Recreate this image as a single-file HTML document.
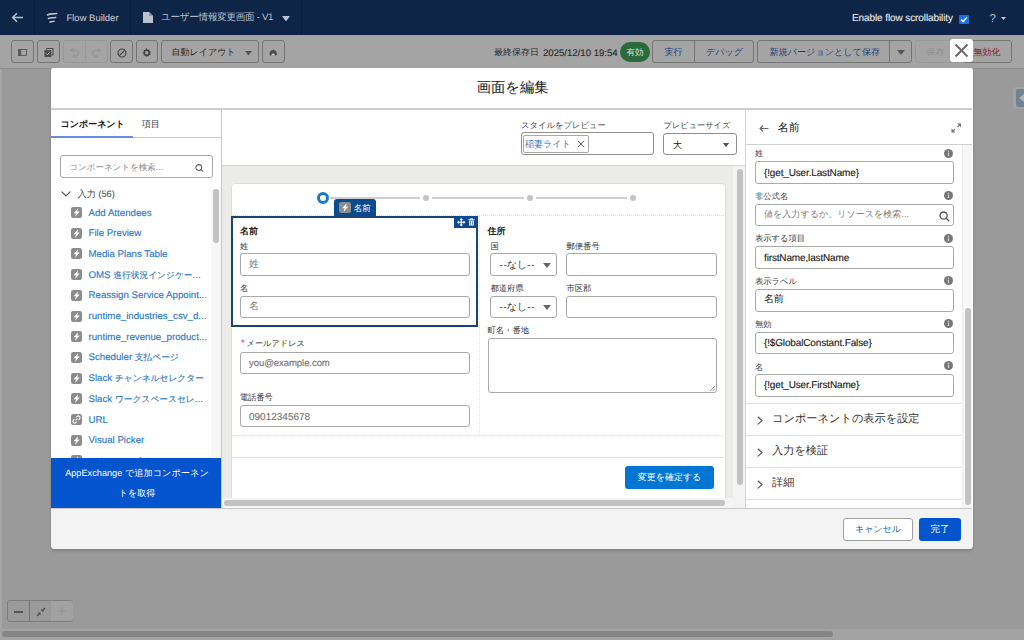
<!DOCTYPE html>
<html><head><meta charset="utf-8">
<style>
*{box-sizing:border-box;margin:0;padding:0}
html,body{width:1024px;height:640px;overflow:hidden;background:#9a9a9a;font-family:"Liberation Sans",sans-serif;color:#181818;text-rendering:geometricPrecision}
.a{position:absolute}
#hdr{left:0;top:0;width:1024px;height:35px;background:#0f2547}
#tb{left:0;top:35px;width:1024px;height:34px;background:#a4a4a4;border-bottom:1px solid #8e8e8e}
.tbtn{position:absolute;border:1px solid #747474;border-radius:3px;height:23px;top:5px}
.txt{position:absolute;white-space:nowrap;line-height:1}
.inp{border:1px solid #a9a9a9;border-radius:3px;background:#fff}
.j{font-size:0.9em}
.lt{-webkit-text-stroke:0.12px currentColor}
.li{position:absolute;left:0;width:170px;height:12px}
#modal{left:51px;top:68px;width:921.6px;height:481px;background:#fff;border-radius:2px 2px 4px 4px;overflow:hidden;box-shadow:0 2px 3px rgba(0,0,0,0.16)}
</style></head><body>
<div id="hdr" class="a">
  <svg class="a" style="left:11px;top:12px" width="13" height="11" viewBox="0 0 13 11"><path d="M12 5.5H2M6 1.2L1.7 5.5L6 9.8" stroke="#b9c1cf" stroke-width="1.5" fill="none"/></svg>
  <div class="a" style="left:34px;top:0;width:1px;height:35px;background:#0a1d3b"></div>
  <svg class="a" style="left:46px;top:11.5px" width="12" height="12" viewBox="0 0 12 12"><path d="M1.5 3C4.5 1.2 7 2.4 10.6 1.5M2.5 6.5C4.8 5.2 7 6.2 9.6 5.4M4 10C5.4 9.2 6.6 9.8 8 9.3" stroke="#b9c1cf" stroke-width="1.6" fill="none" stroke-linecap="round"/></svg>
  <div class="txt lt" style="left:66.5px;top:13.8px;font-size:9.5px;color:#b9c1cf;letter-spacing:-0.02px">Flow Builder</div>
  <div class="a" style="left:130px;top:0;width:1px;height:35px;background:#0a1d3b"></div>
  <svg class="a" style="left:143px;top:12px" width="10" height="11" viewBox="0 0 10 11"><path d="M0 0H6L10 4V11H0Z" fill="#b9c1cf"/><path d="M6 0V4H10Z" fill="#8d96a6"/></svg>
  <div class="txt" style="left:161px;top:13px;font-size:9.6px;color:#b9c1cf;letter-spacing:-0.3px">ユーザー情報変更画面 - V1</div>
  <svg class="a" style="left:281.5px;top:15.5px" width="8" height="5.5" viewBox="0 0 8 5.5"><path d="M0 0H8L4 5.5Z" fill="#b9c1cf"/></svg>
  <div class="a" style="left:301px;top:0;width:1px;height:35px;background:#0a1d3b"></div>
  <div class="txt lt" style="left:852px;top:14.3px;font-size:10px;color:#e6e8ec;letter-spacing:-0.1px">Enable flow scrollability</div>
  <div class="a" style="left:959px;top:15px;width:10px;height:9px;background:#1d6fe0;border-radius:1px"></div>
  <svg class="a" style="left:959px;top:15px" width="10" height="9" viewBox="0 0 10 9"><path d="M2.2 4.6L4.2 6.6L7.8 2.4" stroke="#fff" stroke-width="1.4" fill="none"/></svg>
  <div class="txt" style="left:989.5px;top:13.5px;font-size:11.5px;color:#b9c1cf">?</div>
  <svg class="a" style="left:1001px;top:17px" width="5" height="3" viewBox="0 0 5 3"><path d="M0 0H5L2.5 3Z" fill="#c3c8d0"/></svg>
</div>
<div id="tb" class="a">
  <div class="tbtn" style="left:11px;width:23px"></div>
  <svg class="a" style="left:18.3px;top:13.8px" width="9" height="7" viewBox="0 0 9 7"><rect x="0.5" y="0.5" width="8" height="6" fill="none" stroke="#585858" stroke-width="0.9"/><rect x="0" y="0" width="3.2" height="7" fill="#5a5a5a"/></svg>
  <div class="tbtn" style="left:37px;width:23px"></div>
  <svg class="a" style="left:44px;top:12.5px" width="9.5" height="9.5" viewBox="0 0 11 11"><path d="M3 2V0.6H10.4V8H9" stroke="#4a4a4a" stroke-width="1.2" fill="none"/><rect x="0.5" y="2.5" width="8" height="8" fill="#4a4a4a"/><path d="M2.3 6.3L3.9 7.9L6.8 4.8" stroke="#bbb" stroke-width="1.1" fill="none"/></svg>
  <div class="tbtn" style="left:62.5px;width:45px;border-color:#979797"></div>
  <div class="a" style="left:85px;top:6px;width:1px;height:21px;background:#9a9a9a"></div>
  <svg class="a" style="left:69.5px;top:12.3px" width="10" height="10" viewBox="0 0 11 11"><path d="M3.5 1L1 3.5L3.5 6M1.2 3.5H6.5A3.3 3.3 0 0 1 6.5 10H3" stroke="#8d8d8d" stroke-width="1.1" fill="none"/></svg>
  <svg class="a" style="left:91px;top:12.3px" width="10" height="10" viewBox="0 0 11 11"><path d="M7.5 1L10 3.5L7.5 6M9.8 3.5H4.5A3.3 3.3 0 0 0 4.5 10H8" stroke="#8d8d8d" stroke-width="1.1" fill="none"/></svg>
  <div class="tbtn" style="left:110px;width:23px"></div>
  <svg class="a" style="left:116.5px;top:13px" width="10" height="10" viewBox="0 0 10 10"><circle cx="5" cy="5" r="4" stroke="#444" stroke-width="1.2" fill="none"/><path d="M2.2 7.8L7.8 2.2" stroke="#444" stroke-width="1.2"/></svg>
  <div class="tbtn" style="left:136px;width:22px"></div>
  <svg class="a" style="left:141.8px;top:13.2px" width="9.5" height="9.5" viewBox="0 0 11 11"><path d="M5.5 0.5L6.6 2L8.5 1.6L8.6 3.5L10.4 4.3L9.3 5.8L10.2 7.5L8.3 8L7.9 9.9L6.1 9.2L4.6 10.4L3.7 8.7L1.8 8.6L2.1 6.7L0.6 5.5L2.1 4.3L1.8 2.4L3.7 2.3L4.6 0.6Z" fill="#444"/><circle cx="5.5" cy="5.5" r="2" fill="#a4a4a4"/></svg>
  <div class="tbtn" style="left:161px;width:98px"></div>
  <div class="txt" style="left:171.5px;top:13px;font-size:9px;color:#2a2a2a">自動レイアウト</div>
  <svg class="a" style="left:244.5px;top:16px" width="7" height="4.5" viewBox="0 0 8 5"><path d="M0 0H8L4 5Z" fill="#555"/></svg>
  <div class="tbtn" style="left:262px;width:23px"></div>
  <svg class="a" style="left:268.7px;top:13.5px" width="8.5" height="7.5" viewBox="0 0 8.5 7.5"><path d="M0.6 5.8C0.2 2.6 2 1 4.25 1C6.5 1 8.3 2.6 7.9 5.8C7.5 7.2 1 7.2 0.6 5.8Z" fill="#4a4a4a"/><path d="M3.9 0.2L4.6 0.2L4.5 1.4H4Z" fill="#4a4a4a"/><path d="M2.3 6.8C2.3 5 3.2 4.2 4.25 4.2C5.3 4.2 6.2 5 6.2 6.8Z" fill="#b9b9b9"/></svg>

  <div class="txt" style="left:494px;top:13px;font-size:9px;color:#2a2a2a">最終保存日</div><div class="txt lt" style="left:543px;top:13.6px;font-size:9.6px;color:#2a2a2a">2025/12/10 19:54</div>
  <div class="a" style="left:620px;top:7px;width:30px;height:19.7px;border-radius:10px;background:#2a6a3b"></div>
  <div class="txt" style="left:626.5px;top:12.8px;font-size:8.5px;color:#d8e3da">有効</div>
  <div class="tbtn" style="left:652px;width:102px"></div>
  <div class="a" style="left:694px;top:6px;width:1px;height:21px;background:#747474"></div>
  <div class="txt" style="left:664.5px;top:13px;font-size:9px;color:#1d3f7a">実行</div>
  <div class="txt" style="left:706px;top:13px;font-size:9px;color:#1d3f7a">デバッグ</div>
  <div class="tbtn" style="left:757px;width:155px"></div>
  <div class="a" style="left:889px;top:6px;width:1px;height:21px;background:#747474"></div>
  <div class="txt" style="left:769.5px;top:13px;font-size:9.1px;color:#1d3f7a">新規バージョンとして保存</div>
  <svg class="a" style="left:897px;top:15px" width="8" height="5" viewBox="0 0 8 5"><path d="M0 0H8L4 5Z" fill="#555"/></svg>
  <div class="tbtn" style="left:915px;width:50px;border-color:#9a9a9a"></div>
  <div class="txt" style="left:926.5px;top:13px;font-size:9px;color:#8f8f8f">保存</div>
  <div class="tbtn" style="left:962px;width:50px"></div>
  <div class="txt" style="left:973.5px;top:13px;font-size:9px;color:#7c2323">無効化</div>
</div>
<div class="a" style="left:950px;top:39px;width:23px;height:23px;background:#fff;border-radius:3px"></div>
<svg class="a" style="left:954px;top:43px" width="15" height="15" viewBox="0 0 15 15"><path d="M1.5 1.5L13.5 13.5M13.5 1.5L1.5 13.5" stroke="#6b6b6b" stroke-width="2"/></svg>
<div class="a" style="left:0;top:69px;width:2px;height:571px;background:#a6a6a6"></div>
<div class="a" style="left:1013px;top:87px;width:11px;height:22px;background:#a3a3a3;border-radius:3px 0 0 3px"></div>
<div class="a" style="left:1016px;top:89px;width:8px;height:18px;background:#728290;border-radius:2px 0 0 2px"></div>
<svg class="a" style="left:1019px;top:94px" width="5" height="8" viewBox="0 0 5 8"><path d="M5 0V8L0 4Z" fill="#a9b3bb"/></svg>
<div class="a" style="left:7px;top:600px;width:66px;height:22px;border:1px solid #7c7c7c;border-radius:3px"></div>
<div class="a" style="left:29px;top:600px;width:1px;height:22px;background:#747474"></div>
<div class="a" style="left:51px;top:600px;width:1px;height:22px;background:#929292"></div>
<div class="a" style="left:51px;top:601px;width:22px;height:20px;background:#a2a2a2;border-radius:0 3px 3px 0"></div>
<div class="a" style="left:14px;top:611px;width:9px;height:1.5px;background:#555"></div>
<svg class="a" style="left:35.5px;top:606.5px" width="10" height="10" viewBox="0 0 10 10"><path d="M1 9L3.6 6.4M9 1L6.4 3.6" stroke="#444" stroke-width="1.1"/><path d="M1.8 5.5H4.5V8.2Z M8.2 4.5H5.5V1.8Z" fill="#444"/></svg>
<svg class="a" style="left:57px;top:606px" width="10" height="10" viewBox="0 0 10 10"><path d="M5 1V9M1 5H9" stroke="#939393" stroke-width="1.1"/></svg>
<div class="a" style="left:0;top:629px;width:1024px;height:11px;background:#a3a3a3"></div>
<div class="a" style="left:2px;top:631px;width:831px;height:6px;background:#858585;border-radius:3px"></div>
<div id="modal" class="a">
  <!-- header -->
  <div class="txt" style="left:425.7px;top:13px;font-size:14.3px;color:#181818;line-height:15px">画面を編集</div>
  <div class="a" style="left:0;top:40.4px;width:921px;height:1.4px;background:#cdcdcd"></div>

  <!-- left panel -->
  <div class="a" style="left:170px;top:41px;width:1px;height:399px;background:#c9c9c9"></div>
  <div class="txt" style="left:9.5px;top:51.5px;font-size:9px;font-weight:bold;color:#181818">コンポーネント</div>
  <div class="txt" style="left:90.7px;top:51.5px;font-size:9px;color:#3e3e3e">項目</div>
  <div class="a" style="left:0;top:69px;width:170px;height:1px;background:#c9c9c9"></div>
  <div class="a" style="left:0;top:68px;width:82px;height:2px;background:#6a8be0"></div>
  <div class="a" style="left:9px;top:87px;width:153px;height:23px;border:1px solid #a8a8a8;border-radius:3px"></div>
  <div class="txt" style="left:18.3px;top:94.5px;font-size:8.5px;color:#8a8a8a">コンポーネントを検索...</div>
  <svg class="a" style="left:143.6px;top:95.5px" width="9" height="8" viewBox="0 0 11 10"><circle cx="4.6" cy="4.4" r="3.6" stroke="#5e5e5e" stroke-width="1.3" fill="none"/><path d="M7.3 7.1L10 9.6" stroke="#5e5e5e" stroke-width="1.4"/></svg>
  <svg class="a" style="left:10px;top:123px" width="10" height="6" viewBox="0 0 10 6"><path d="M0.7 0.7L5 5L9.3 0.7" stroke="#555" stroke-width="1.2" fill="none"/></svg>
  <div class="txt" style="left:26.5px;top:122.3px;font-size:9.2px;color:#3e3e3e">入力 (56)</div>
  <div class="a" style="left:0;top:118px;width:170px;height:272px;overflow:hidden"><div class="a" style="left:0;top:-118px;width:170px;height:400px"><div class="li" style="top:139.0px">
<svg class="a" style="left:20px;top:0" width="11" height="11" viewBox="0 0 11 11"><rect width="11" height="11" rx="2.2" fill="#8c8c8c"/><path d="M7.2 1.2L2.6 6.3H5L4 9.9L8.7 4.5H6.3Z" fill="#fff"/></svg>
<div class="txt lt" style="left:37.5px;top:1.6px;font-size:9.7px;color:#2a77c6">Add Attendees</div></div>
<div class="li" style="top:159.7px">
<svg class="a" style="left:20px;top:0" width="11" height="11" viewBox="0 0 11 11"><rect width="11" height="11" rx="2.2" fill="#8c8c8c"/><path d="M7.2 1.2L2.6 6.3H5L4 9.9L8.7 4.5H6.3Z" fill="#fff"/></svg>
<div class="txt lt" style="left:37.5px;top:1.6px;font-size:9.7px;color:#2a77c6">File Preview</div></div>
<div class="li" style="top:180.4px">
<svg class="a" style="left:20px;top:0" width="11" height="11" viewBox="0 0 11 11"><rect width="11" height="11" rx="2.2" fill="#8c8c8c"/><path d="M7.2 1.2L2.6 6.3H5L4 9.9L8.7 4.5H6.3Z" fill="#fff"/></svg>
<div class="txt lt" style="left:37.5px;top:1.6px;font-size:9.7px;color:#2a77c6">Media Plans Table</div></div>
<div class="li" style="top:201.1px">
<svg class="a" style="left:20px;top:0" width="11" height="11" viewBox="0 0 11 11"><rect width="11" height="11" rx="2.2" fill="#8c8c8c"/><path d="M7.2 1.2L2.6 6.3H5L4 9.9L8.7 4.5H6.3Z" fill="#fff"/></svg>
<div class="txt lt" style="left:37.5px;top:1.6px;font-size:9.7px;color:#2a77c6">OMS <span class="j">進行状況インジケー</span>...</div></div>
<div class="li" style="top:221.8px">
<svg class="a" style="left:20px;top:0" width="11" height="11" viewBox="0 0 11 11"><rect width="11" height="11" rx="2.2" fill="#8c8c8c"/><path d="M7.2 1.2L2.6 6.3H5L4 9.9L8.7 4.5H6.3Z" fill="#fff"/></svg>
<div class="txt lt" style="left:37.5px;top:1.6px;font-size:9.7px;color:#2a77c6">Reassign Service Appoint...</div></div>
<div class="li" style="top:242.5px">
<svg class="a" style="left:20px;top:0" width="11" height="11" viewBox="0 0 11 11"><rect width="11" height="11" rx="2.2" fill="#8c8c8c"/><path d="M7.2 1.2L2.6 6.3H5L4 9.9L8.7 4.5H6.3Z" fill="#fff"/></svg>
<div class="txt lt" style="left:37.5px;top:1.6px;font-size:9.7px;color:#2a77c6">runtime_industries_csv_d...</div></div>
<div class="li" style="top:263.2px">
<svg class="a" style="left:20px;top:0" width="11" height="11" viewBox="0 0 11 11"><rect width="11" height="11" rx="2.2" fill="#8c8c8c"/><path d="M7.2 1.2L2.6 6.3H5L4 9.9L8.7 4.5H6.3Z" fill="#fff"/></svg>
<div class="txt lt" style="left:37.5px;top:1.6px;font-size:9.7px;color:#2a77c6">runtime_revenue_product...</div></div>
<div class="li" style="top:283.9px">
<svg class="a" style="left:20px;top:0" width="11" height="11" viewBox="0 0 11 11"><rect width="11" height="11" rx="2.2" fill="#8c8c8c"/><path d="M7.2 1.2L2.6 6.3H5L4 9.9L8.7 4.5H6.3Z" fill="#fff"/></svg>
<div class="txt lt" style="left:37.5px;top:1.6px;font-size:9.7px;color:#2a77c6">Scheduler <span class="j">支払ページ</span></div></div>
<div class="li" style="top:304.6px">
<svg class="a" style="left:20px;top:0" width="11" height="11" viewBox="0 0 11 11"><rect width="11" height="11" rx="2.2" fill="#8c8c8c"/><path d="M7.2 1.2L2.6 6.3H5L4 9.9L8.7 4.5H6.3Z" fill="#fff"/></svg>
<div class="txt lt" style="left:37.5px;top:1.6px;font-size:9.7px;color:#2a77c6">Slack <span class="j">チャンネルセレクター</span></div></div>
<div class="li" style="top:325.3px">
<svg class="a" style="left:20px;top:0" width="11" height="11" viewBox="0 0 11 11"><rect width="11" height="11" rx="2.2" fill="#8c8c8c"/><path d="M7.2 1.2L2.6 6.3H5L4 9.9L8.7 4.5H6.3Z" fill="#fff"/></svg>
<div class="txt lt" style="left:37.5px;top:1.6px;font-size:9.7px;color:#2a77c6">Slack <span class="j">ワークスペースセレ</span>...</div></div>
<div class="li" style="top:346.0px">
<svg class="a" style="left:20px;top:0" width="11" height="11" viewBox="0 0 11 11"><rect width="11" height="11" rx="2.2" fill="#8c8c8c"/><path d="M4.6 6.4L6.4 4.6M5.2 3.4L6.2 2.4A1.6 1.6 0 0 1 8.6 4.8L7.6 5.8M5.8 7.6L4.8 8.6A1.6 1.6 0 0 1 2.4 6.2L3.4 5.2" stroke="#fff" stroke-width="1.1" fill="none"/></svg>
<div class="txt lt" style="left:37.5px;top:1.6px;font-size:9.7px;color:#2a77c6">URL</div></div>
<div class="li" style="top:366.7px">
<svg class="a" style="left:20px;top:0" width="11" height="11" viewBox="0 0 11 11"><rect width="11" height="11" rx="2.2" fill="#8c8c8c"/><path d="M7.2 1.2L2.6 6.3H5L4 9.9L8.7 4.5H6.3Z" fill="#fff"/></svg>
<div class="txt lt" style="left:37.5px;top:1.6px;font-size:9.7px;color:#2a77c6">Visual Picker</div></div>
<div class="li" style="top:387.4px">
<svg class="a" style="left:20px;top:0" width="11" height="11" viewBox="0 0 11 11"><rect width="11" height="11" rx="2.2" fill="#8c8c8c"/><path d="M7.2 1.2L2.6 6.3H5L4 9.9L8.7 4.5H6.3Z" fill="#fff"/></svg>
<div class="txt lt" style="left:37.5px;top:1.6px;font-size:9.7px;color:#2a77c6"><span class="j">アクションボタン</span></div></div></div></div>
  <div class="a" style="left:160px;top:121px;width:10px;height:269px;background:#f7f7f7"></div>
  <div class="a" style="left:162px;top:121px;width:6px;height:54px;background:#c2c2c2;border-radius:3px"></div>
  <div class="a" style="left:0;top:390px;width:170px;height:50px;background:#0454ce"></div>
  <div class="txt" style="left:1px;top:401px;width:170px;text-align:center;font-size:9.2px;color:#fff">AppExchange で追加コンポーネン</div>
  <div class="txt" style="left:1px;top:421px;width:170px;text-align:center;font-size:9px;color:#fff">トを取得</div>

  <!-- center panel -->
  <div class="a" style="left:694px;top:41px;width:1px;height:399px;background:#d4d4d4"></div>
  <div class="txt" style="left:470px;top:52.5px;font-size:8.3px;color:#444">スタイルをプレビュー</div>
  <div class="a" style="left:470px;top:64.4px;width:133.3px;height:22.8px;border:1px solid #8f8f8f;border-radius:3px"></div>
  <div class="a" style="left:472px;top:67px;width:66px;height:18px;border:1px solid #a8a8a8;border-radius:2px"></div>
  <div class="txt" style="left:474px;top:72px;font-size:9px;color:#2674c4">稲妻ライト</div>
  <svg class="a" style="left:526px;top:72px" width="8" height="8" viewBox="0 0 8 8"><path d="M0.8 0.8L7.2 7.2M7.2 0.8L0.8 7.2" stroke="#606060" stroke-width="1"/></svg>
  <div class="txt" style="left:612.5px;top:53.5px;font-size:8.2px;color:#444">プレビューサイズ</div>
  <div class="a" style="left:612.3px;top:64.6px;width:73.6px;height:22.6px;border:1px solid #8f8f8f;border-radius:3px"></div>
  <div class="txt" style="left:622px;top:72.5px;font-size:9px;color:#181818">大</div>
  <svg class="a" style="left:671px;top:75px" width="8" height="4" viewBox="0 0 8 5"><path d="M0 0H8L4 5Z" fill="#555"/></svg>
  <div class="a" style="left:171px;top:97px;width:523px;height:1px;background:#d4d4d4"></div>
  <div class="a" style="left:171px;top:98px;width:523px;height:342px;background:#ebebea"></div>
    <div class="a" style="left:179.6px;top:115.3px;width:495.6px;height:325px;background:#fff;border:1px solid #dddddd;border-radius:4px 4px 0 0"></div>
  <!-- progress -->
  <div class="a" style="left:279px;top:129px;width:308px;height:2px;background:#cfcfcf"></div>
  <div class="a" style="left:266px;top:124px;width:12px;height:12px;border-radius:50%;border:3px solid #1a78c6;background:#fff"></div>
  <div class="a" style="left:372px;top:127px;width:6px;height:6px;border-radius:50%;background:#c4c4c4;box-shadow:0 0 0 3px #fff"></div>
  <div class="a" style="left:476px;top:127px;width:6px;height:6px;border-radius:50%;background:#c4c4c4;box-shadow:0 0 0 3px #fff"></div>
  <div class="a" style="left:579px;top:127px;width:6px;height:6px;border-radius:50%;background:#c4c4c4;box-shadow:0 0 0 3px #fff"></div>
  <!-- dashed section outlines -->
  <div class="a" style="left:181px;top:147px;width:492px;height:0;border-top:1px dotted #dedede"></div>
  <div class="a" style="left:428px;top:148px;width:0;height:220px;border-left:1px dotted #e2e2e2"></div>
  <div class="a" style="left:181px;top:367px;width:492px;height:0;border-top:1px dotted #dedede"></div>
  <!-- tab -->
  <div class="a" style="left:283px;top:131px;width:42px;height:18px;background:#0b4a8f;border-radius:3px 3px 0 0"></div>
  <svg class="a" style="left:288px;top:134px" width="12" height="11" viewBox="0 0 12 11"><rect width="12" height="11" rx="2" fill="#8c8c8c"/><path d="M7.7 1.2L3.1 6.3H5.5L4.5 9.9L9.2 4.5H6.8Z" fill="#fff"/></svg>
  <div class="txt" style="left:302.7px;top:135.7px;font-size:8.6px;color:#fff">名前</div>
  <!-- selected section -->
  <div class="a" style="left:180px;top:148px;width:247px;height:111px;border:2px solid #1a4474"></div>
  <div class="a" style="left:403px;top:148px;width:24px;height:12px;background:#0b4a92"></div>
  <svg class="a" style="left:406px;top:150px" width="8.5" height="8.5" viewBox="0 0 10 10"><path d="M5 1.5V8.5M1.5 5H8.5" stroke="#fff" stroke-width="1.4"/><path d="M5 0L2.9 2.4H7.1Z M5 10L2.9 7.6H7.1Z M0 5L2.4 2.9V7.1Z M10 5L7.6 2.9V7.1Z" fill="#fff"/></svg>
  <svg class="a" style="left:416.5px;top:150px" width="7" height="8" viewBox="0 0 9 10"><path d="M0.5 2H8.5M3 2V0.8H6V2" stroke="#fff" stroke-width="1.1" fill="none"/><path d="M1.5 3H7.5V9.5H1.5Z" fill="#fff"/><path d="M3.3 4V8.5M5.7 4V8.5" stroke="#0b3f7c" stroke-width="0.8"/></svg>
  <div class="txt" style="left:189px;top:158.5px;font-size:9px;font-weight:bold;color:#222">名前</div>
  <div class="txt" style="left:189px;top:174px;font-size:8.3px;color:#333">姓</div>
  <div class="a inp" style="left:189px;top:185px;width:230px;height:23px"></div>
  <div class="txt" style="left:198px;top:192px;font-size:10px;color:#7a7a7a">姓</div>
  <div class="txt" style="left:189px;top:215.5px;font-size:8.3px;color:#333">名</div>
  <div class="a inp" style="left:189px;top:228px;width:230px;height:22px"></div>
  <div class="txt" style="left:198px;top:234px;font-size:10px;color:#7a7a7a">名</div>
  <div class="txt" style="left:190px;top:271px;font-size:9.5px;color:#c23934">*</div>
  <div class="txt" style="left:195.5px;top:272.3px;font-size:8.2px;color:#333">メールアドレス</div>
  <div class="a inp" style="left:189px;top:284px;width:230px;height:22px"></div>
  <div class="txt lt" style="left:198px;top:291.4px;font-size:9.6px;color:#747474;letter-spacing:-0.1px">you@example.com</div>
  <div class="txt" style="left:188.7px;top:325.3px;font-size:8.3px;color:#333">電話番号</div>
  <div class="a inp" style="left:189px;top:337px;width:230px;height:22px"></div>
  <div class="txt lt" style="left:198px;top:344.7px;font-size:10px;color:#747474">09012345678</div>
  <!-- right column -->
  <div class="txt" style="left:436.5px;top:158.5px;font-size:9px;font-weight:bold;color:#222">住所</div>
  <div class="txt" style="left:439.5px;top:174px;font-size:8.3px;color:#333">国</div>
  <div class="txt" style="left:515.5px;top:174px;font-size:8.3px;color:#333">郵便番号</div>
  <div class="a inp" style="left:439.2px;top:185.4px;width:67.3px;height:22.6px"></div>
  <div class="txt" style="left:448.5px;top:193px;font-size:10px;color:#333">-<span style="margin-left:0.6px">-</span>なし-<span style="margin-left:0.6px">-</span></div>
  <svg class="a" style="left:492px;top:195px" width="8" height="5" viewBox="0 0 8 5"><path d="M0 0H8L4 5Z" fill="#666"/></svg>
  <div class="a inp" style="left:514.5px;top:185.4px;width:151.3px;height:22.6px"></div>
  <div class="txt" style="left:439.5px;top:215.5px;font-size:8.3px;color:#333">都道府県</div>
  <div class="txt" style="left:515.5px;top:215.5px;font-size:8.3px;color:#333">市区郡</div>
  <div class="a inp" style="left:439.2px;top:227.5px;width:67.3px;height:22.6px"></div>
  <div class="txt" style="left:448.5px;top:235px;font-size:10px;color:#333">-<span style="margin-left:0.6px">-</span>なし-<span style="margin-left:0.6px">-</span></div>
  <svg class="a" style="left:492px;top:237px" width="8" height="5" viewBox="0 0 8 5"><path d="M0 0H8L4 5Z" fill="#666"/></svg>
  <div class="a inp" style="left:514.5px;top:227.5px;width:151.3px;height:22.6px"></div>
  <div class="txt" style="left:436.5px;top:257.5px;font-size:8.3px;color:#333">町名・番地</div>
  <div class="a inp" style="left:436.5px;top:270px;width:229px;height:55px"></div>
  <svg class="a" style="left:659px;top:318px" width="5" height="5" viewBox="0 0 5 5"><path d="M5 0L0 5M5 2.5L2.5 5" stroke="#888" stroke-width="0.8"/></svg>
  <!-- card footer -->
  <div class="a" style="left:181px;top:389px;width:492px;height:1px;background:#dedede"></div>
  <div class="a" style="left:574px;top:398px;width:89px;height:23px;background:#0176d3;border-radius:3px"></div>
  <div class="txt" style="left:574px;top:405px;width:89px;text-align:center;font-size:9px;color:#fff">変更を確定する</div>
  <!-- scrollbars -->
  <div class="a" style="left:171px;top:430px;width:514px;height:10px;background:#f5f5f5"></div>
  <div class="a" style="left:172.5px;top:432.3px;width:501.5px;height:5.5px;background:#c2c2c2;border-radius:3px"></div>
  <div class="a" style="left:682px;top:98px;width:12px;height:342px;background:#f3f3f3"></div>
  <div class="a" style="left:686px;top:100.5px;width:5.6px;height:316.5px;background:#c2c2c2;border-radius:3px"></div>


  <!-- right panel -->
    <svg class="a" style="left:707.5px;top:56.5px" width="10" height="7" viewBox="0 0 10 7"><path d="M9.5 3.5H1M4 0.5L1 3.5L4 6.5" stroke="#666" stroke-width="1.1" fill="none"/></svg>
  <div class="txt" style="left:726.7px;top:54.5px;font-size:11px;color:#181818">名前</div>
  <svg class="a" style="left:899.5px;top:54.5px" width="10.5" height="10" viewBox="0 0 11 10.5"><path d="M1.2 9.3L4.2 6.3M9.8 1.2L6.8 4.2" stroke="#777" stroke-width="1.2"/><path d="M0.5 10V5.8L4.7 10Z M10.5 0.5V4.7L6.3 0.5Z" fill="#777"/></svg>
  <div class="a" style="left:695px;top:76px;width:226px;height:1px;background:#d0d0d0"></div>
  <div class="txt" style="left:704px;top:81.1px;font-size:8.3px;color:#3a3a3a">姓</div>
<svg class="a" style="left:892.5px;top:80.5px" width="9" height="9" viewBox="0 0 9 9"><circle cx="4.5" cy="4.5" r="4.5" fill="#777"/><rect x="3.9" y="3.6" width="1.2" height="3.4" fill="#d0d0d0"/><circle cx="4.5" cy="2.3" r="0.7" fill="#d0d0d0"/></svg>
<div class="a inp" style="left:703.7px;top:93.3px;width:199.6px;height:22.6px"></div>
<div class="txt lt" style="left:713px;top:101px;font-size:10px;color:#181818;letter-spacing:-0.15px">{!get_User.LastName}</div>
<div class="txt" style="left:704px;top:124.1px;font-size:8.3px;color:#3a3a3a">非公式名</div>
<svg class="a" style="left:892.5px;top:122.5px" width="9" height="9" viewBox="0 0 9 9"><circle cx="4.5" cy="4.5" r="4.5" fill="#777"/><rect x="3.9" y="3.6" width="1.2" height="3.4" fill="#d0d0d0"/><circle cx="4.5" cy="2.3" r="0.7" fill="#d0d0d0"/></svg>
<div class="a inp" style="left:703.7px;top:135.8px;width:199.6px;height:22.6px"></div>
<div class="txt" style="left:713px;top:142px;font-size:9.05px;color:#7e7e7e">値を入力するか、リソースを検索...</div>
<svg class="a" style="left:887.5px;top:143px" width="11" height="11" viewBox="0 0 11 11"><circle cx="4.6" cy="4.6" r="3.6" stroke="#555" stroke-width="1.3" fill="none"/><path d="M7.3 7.3L10.2 10.2" stroke="#555" stroke-width="1.4"/></svg>
<div class="txt" style="left:704px;top:166.3px;font-size:8.3px;color:#3a3a3a">表示する項目</div>
<svg class="a" style="left:892.5px;top:165.5px" width="9" height="9" viewBox="0 0 9 9"><circle cx="4.5" cy="4.5" r="4.5" fill="#777"/><rect x="3.9" y="3.6" width="1.2" height="3.4" fill="#d0d0d0"/><circle cx="4.5" cy="2.3" r="0.7" fill="#d0d0d0"/></svg>
<div class="a inp" style="left:703.7px;top:178.2px;width:199.6px;height:22.6px"></div>
<div class="txt lt" style="left:713px;top:186px;font-size:10px;color:#181818;letter-spacing:-0.15px">firstName,lastName</div>
<div class="txt" style="left:704px;top:209px;font-size:8.3px;color:#3a3a3a">表示ラベル</div>
<svg class="a" style="left:892.5px;top:207.5px" width="9" height="9" viewBox="0 0 9 9"><circle cx="4.5" cy="4.5" r="4.5" fill="#777"/><rect x="3.9" y="3.6" width="1.2" height="3.4" fill="#d0d0d0"/><circle cx="4.5" cy="2.3" r="0.7" fill="#d0d0d0"/></svg>
<div class="a inp" style="left:703.7px;top:221px;width:199.6px;height:22.6px"></div>
<div class="txt" style="left:713px;top:227px;font-size:10px;color:#181818;letter-spacing:-0.15px">名前</div>
<div class="txt" style="left:704px;top:251.8px;font-size:8.3px;color:#3a3a3a">無効</div>
<svg class="a" style="left:892.5px;top:250.5px" width="9" height="9" viewBox="0 0 9 9"><circle cx="4.5" cy="4.5" r="4.5" fill="#777"/><rect x="3.9" y="3.6" width="1.2" height="3.4" fill="#d0d0d0"/><circle cx="4.5" cy="2.3" r="0.7" fill="#d0d0d0"/></svg>
<div class="a inp" style="left:703.7px;top:263.8px;width:199.6px;height:22.6px"></div>
<div class="txt lt" style="left:713px;top:271px;font-size:10px;color:#181818;letter-spacing:-0.15px">{!$GlobalConstant.False}</div>
<div class="txt" style="left:704px;top:294.5px;font-size:8.3px;color:#3a3a3a">名</div>
<svg class="a" style="left:892.5px;top:292.5px" width="9" height="9" viewBox="0 0 9 9"><circle cx="4.5" cy="4.5" r="4.5" fill="#777"/><rect x="3.9" y="3.6" width="1.2" height="3.4" fill="#d0d0d0"/><circle cx="4.5" cy="2.3" r="0.7" fill="#d0d0d0"/></svg>
<div class="a inp" style="left:703.7px;top:306px;width:199.6px;height:22.6px"></div>
<div class="txt lt" style="left:713px;top:313px;font-size:10px;color:#181818;letter-spacing:-0.15px">{!get_User.FirstName}</div>
  <div class="a" style="left:695px;top:335px;width:216px;height:1px;background:#e0e0e0"></div>
  <div class="a" style="left:695px;top:367px;width:216px;height:1px;background:#e0e0e0"></div>
  <div class="a" style="left:695px;top:399px;width:216px;height:1px;background:#e0e0e0"></div>
  <div class="a" style="left:695px;top:431px;width:216px;height:1px;background:#e0e0e0"></div>
  <svg class="a" style="left:706px;top:348px" width="6" height="10" viewBox="0 0 6 10"><path d="M0.8 0.8L5 4.6L0.8 8.4" stroke="#555" stroke-width="1.25" fill="none"/></svg>
  <div class="txt" style="left:721px;top:346.2px;font-size:11.2px;color:#333">コンポーネントの表示を設定</div>
  <svg class="a" style="left:706px;top:380px" width="6" height="10" viewBox="0 0 6 10"><path d="M0.8 0.8L5 4.6L0.8 8.4" stroke="#555" stroke-width="1.25" fill="none"/></svg>
  <div class="txt" style="left:721px;top:377.7px;font-size:11.2px;color:#333">入力を検証</div>
  <svg class="a" style="left:706px;top:412px" width="6" height="10" viewBox="0 0 6 10"><path d="M0.8 0.8L5 4.6L0.8 8.4" stroke="#555" stroke-width="1.25" fill="none"/></svg>
  <div class="txt" style="left:721px;top:409.7px;font-size:11.2px;color:#333">詳細</div>
  <div class="a" style="left:911px;top:77px;width:10px;height:364px;background:#f7f7f7;border-left:1px solid #ececec"></div>
  <div class="a" style="left:914px;top:240px;width:6px;height:197px;background:#c2c2c2;border-radius:3px"></div>


  <!-- footer -->
  <div class="a" style="left:0;top:440px;width:921px;height:1px;background:#c9c9c9"></div>
  <div class="a" style="left:0;top:441px;width:921px;height:40px;background:#f3f3f3"></div>
  <div class="a" style="left:792px;top:450px;width:70px;height:23px;background:#fff;border:1px solid #a0a0a0;border-radius:3px"></div>
  <div class="txt" style="left:792px;top:457px;width:70px;text-align:center;font-size:9px;color:#0b5cab">キャンセル</div>
  <div class="a" style="left:868px;top:450px;width:42px;height:23px;background:#0454ce;border-radius:3px"></div>
  <div class="txt" style="left:868px;top:457px;width:42px;text-align:center;font-size:9.5px;color:#fff">完了</div>
</div>
</body></html>
